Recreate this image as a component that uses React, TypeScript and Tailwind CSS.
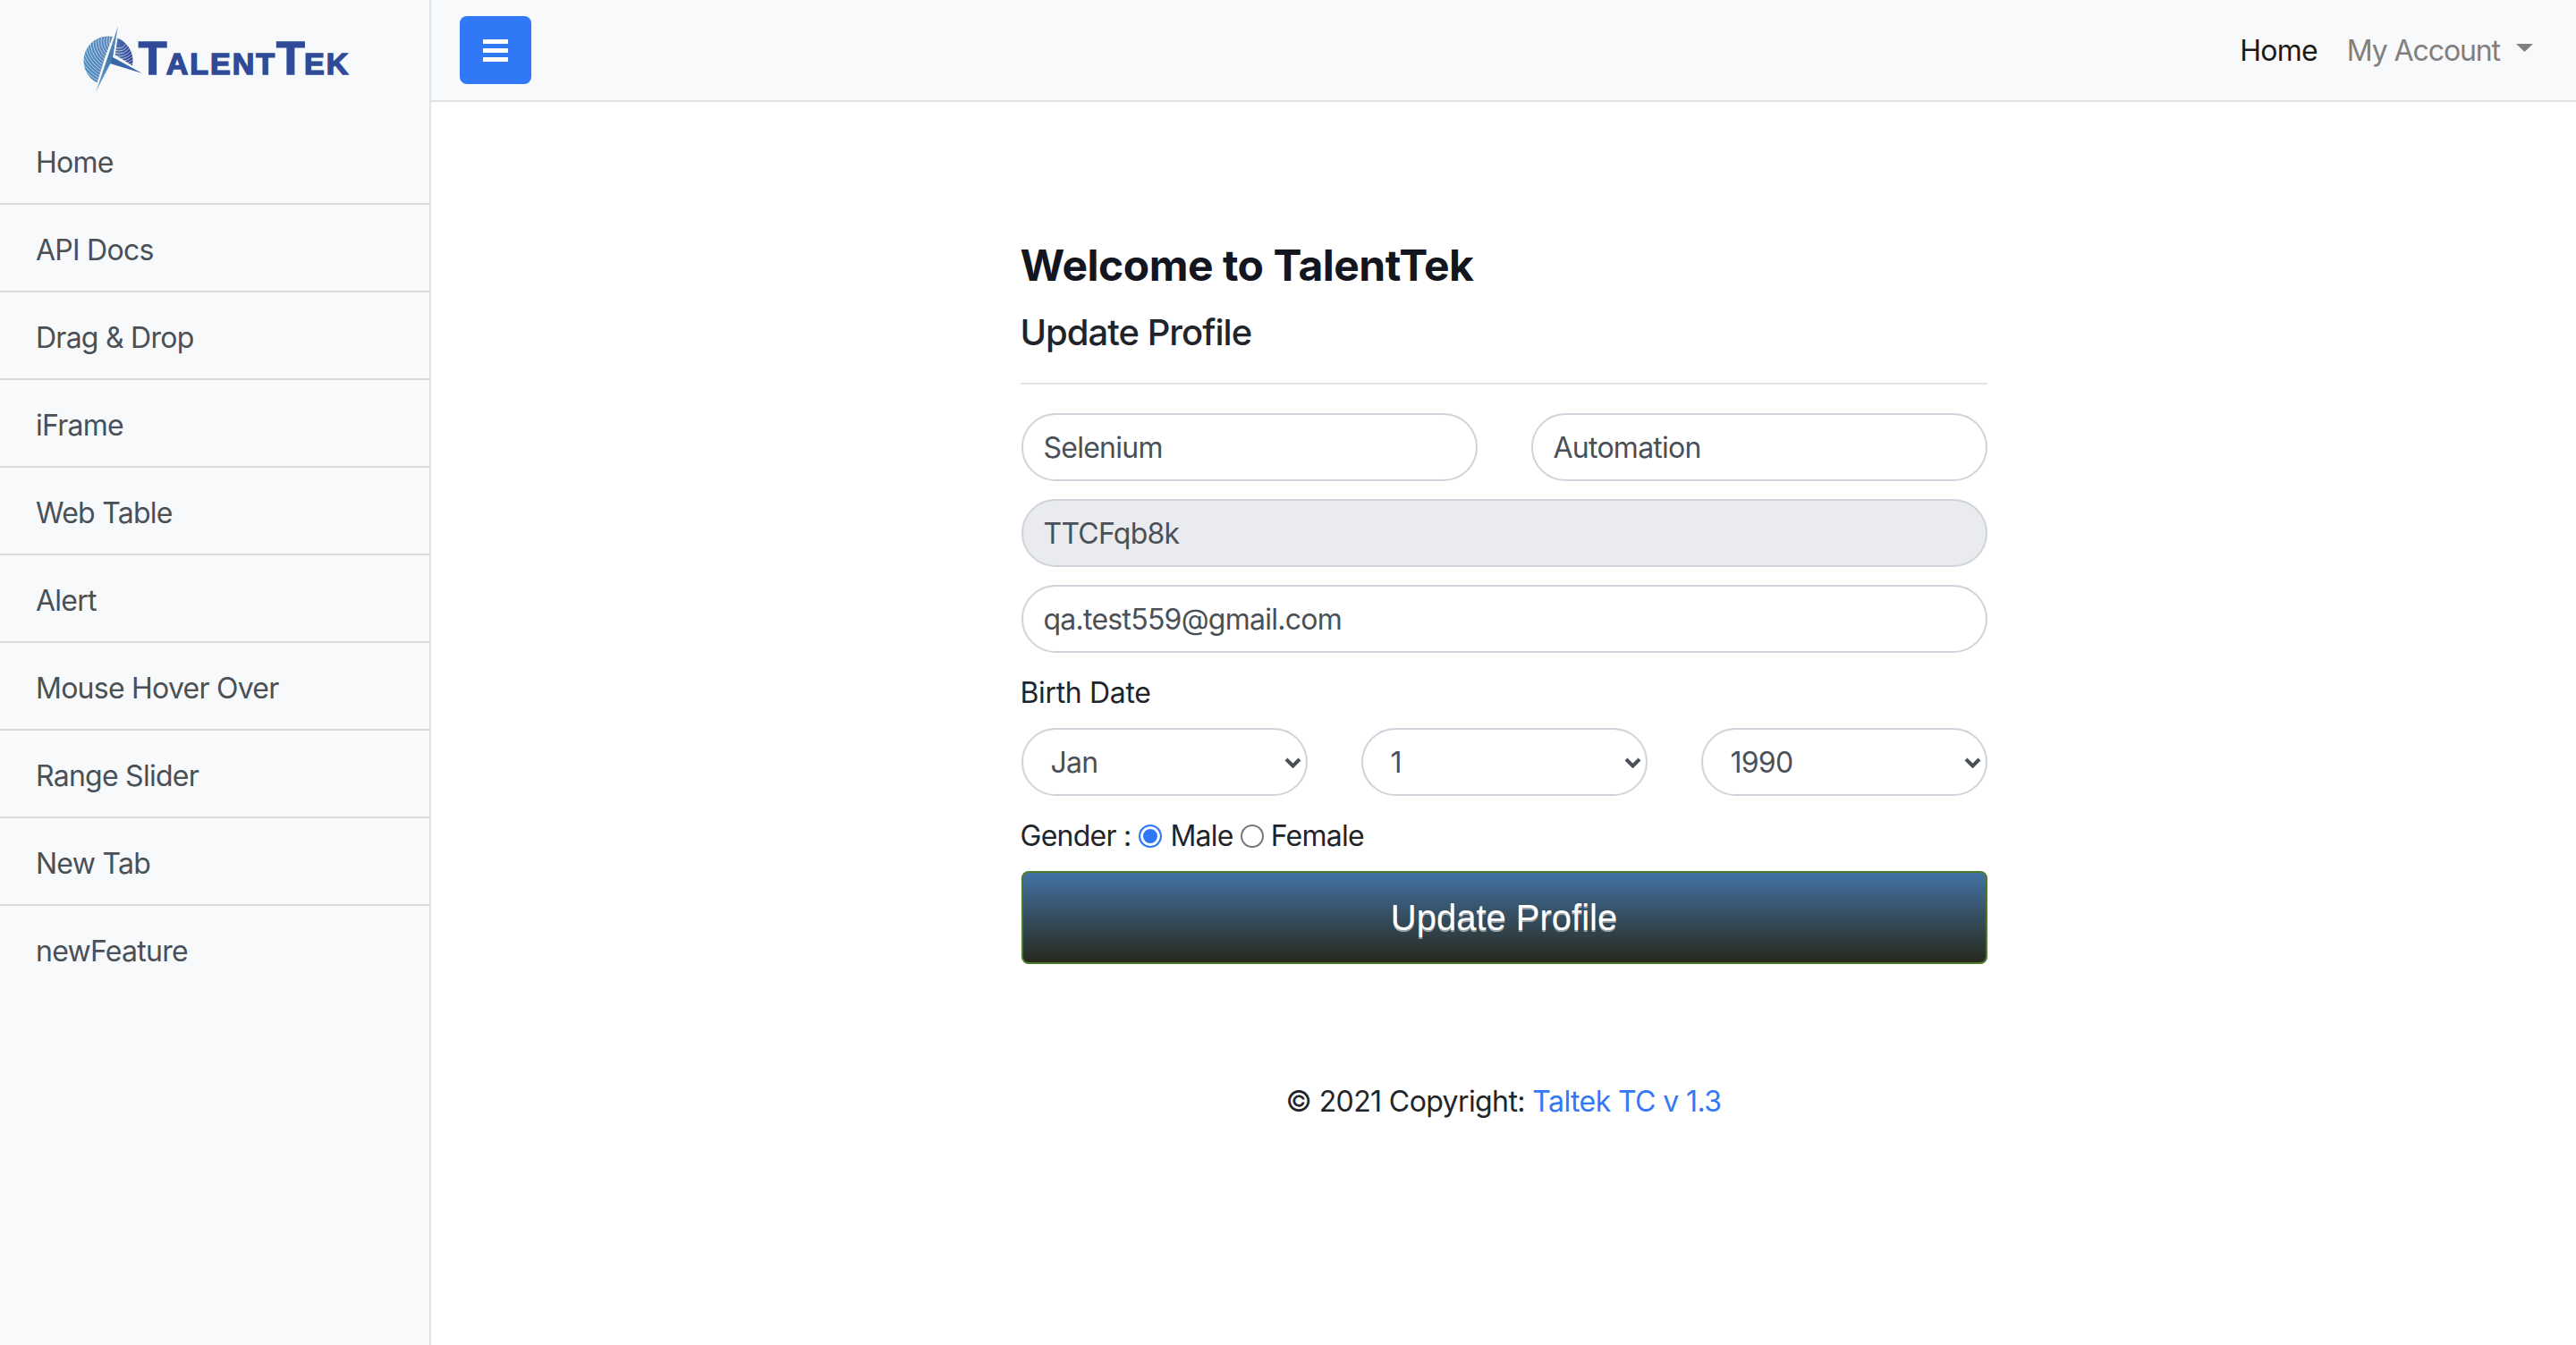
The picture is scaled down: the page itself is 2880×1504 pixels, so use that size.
import React from "react";

const navItems = ["Home", "API Docs", "Drag & Drop", "iFrame", "Web Table", "Alert", "Mouse Hover Over", "Range Slider", "New Tab", "newFeature"];
const rings = [8, 11, 14, 17, 20, 23, 26, 29, 32, 35, 38, 41, 44, 47, 50, 53, 56, 59, 62, 65];

function Logo() {
  return (
    <div className="flex items-center">
      <svg width="68" height="78" viewBox="94 27 68 78" className="block shrink-0 relative z-10">
        <defs>
          <linearGradient id="ball" x1="0" x2="1" y1="0" y2="0">
            <stop offset="0" stopColor="#4a8cbf" />
            <stop offset="0.55" stopColor="#5a86bb" />
            <stop offset="1" stopColor="#2a3c90" />
          </linearGradient>
          <linearGradient id="needle" x1="0" x2="0" y1="0" y2="1">
            <stop offset="0" stopColor="#6d9cc6" />
            <stop offset="0.5" stopColor="#3f78ac" />
            <stop offset="1" stopColor="#7fb0d6" />
          </linearGradient>
          <clipPath id="ballClip"><circle cx="122" cy="68" r="27.5" /></clipPath>
        </defs>
        <circle cx="122" cy="68" r="27.5" fill="url(#ball)" />
        <g clipPath="url(#ballClip)" fill="none" stroke="#f8f9fa" strokeWidth="0.9" opacity="0.7">
          {rings.map((r) => (
            <circle key={r} cx="134" cy="46" r={r} />
          ))}
        </g>
        <path d="M122 68 L165 84 L165 105 L104 105 Z" fill="#f8f9fa" />
        <path d="M133 29 L128 62 L160 82 L124 71 L108 103 L120 64 Z" fill="#f8f9fa" stroke="#f8f9fa" strokeWidth="3" />
        <path d="M133 29 L127 64 L160 82 L124 71 Z" fill="#3a66a8" />
        <path d="M133 29 L121 65 L108 103 L125 70 Z" fill="url(#needle)" />
      </svg>
      <div className="font-['Liberation_Sans',sans-serif] font-bold text-[#2f4b97] leading-none whitespace-nowrap [-webkit-text-stroke:1.5px_#2f4b97] ml-[-6px] mt-[6px] flex items-baseline">
        <span className="text-[52px] leading-[37px]">T</span>
        <span className="text-[34px] leading-[37px] tracking-[2px]">ALENT</span>
        <span className="text-[52px] leading-[37px]">T</span>
        <span className="text-[34px] leading-[37px] tracking-[2px]">EK</span>
      </div>
    </div>
  );
}

function Field({ value, disabled }: { value: string; disabled?: boolean }) {
  return (
    <input
      readOnly
      value={value}
      className={`block w-full h-[76px] rounded-[38px] border-2 border-[#ced4da] px-[23px] text-[32px] tracking-[-0.75px] text-[#495057] outline-none ${disabled ? "bg-[#eaebef]" : "bg-white"}`}
    />
  );
}

function Select({ value }: { value: string }) {
  return (
    <div className="relative">
      <select
        defaultValue={value}
        className="block w-full h-[76px] appearance-none rounded-[38px] border-2 border-[#ced4da] bg-white pt-[2px] pl-[31px] pr-[40px] text-[32px] tracking-[-0.75px] text-[#495057] outline-none"
      >
        <option>{value}</option>
      </select>
      <svg width="19" height="12" viewBox="0 0 19 12" className="absolute right-[7px] top-[33px] pointer-events-none">
        <path d="M2 2 L9.5 9.5 L17 2" fill="none" stroke="#495057" strokeWidth="4" />
      </svg>
    </div>
  );
}

export default function App() {
  return (
    <div className="flex min-h-[1504px] bg-white font-['Inter',sans-serif] text-[32px] tracking-[-0.75px] text-[#212529]">
      <aside className="w-[482px] shrink-0 border-r-2 border-[#dee2e6] bg-[#f8f9fa]">
        <div className="flex h-[131px] items-center justify-center pl-[4px]">
          <Logo />
        </div>
        {navItems.map((item, i) => (
          <div
            key={item}
            className={`h-[98px] pl-[40px] pt-[2px] leading-[98px] text-[#495057] ${i < navItems.length - 1 ? "border-b-2 border-[#d9dadb]" : ""}`}
          >
            {item}
          </div>
        ))}
      </aside>
      <div className="flex min-w-0 flex-1 flex-col">
        <header className="flex h-[114px] items-center justify-between border-b-2 border-[#dee2e6] bg-[#f8f9fa] pl-[32px] pr-[48px]">
          <button className="flex h-[76px] w-[80px] flex-col items-center justify-center gap-[5px] rounded-[8px] bg-[#3178f6]">
            <span className="block h-[5px] w-[28px] bg-white" />
            <span className="block h-[5px] w-[28px] bg-white" />
            <span className="block h-[5px] w-[28px] bg-white" />
          </button>
          <nav className="flex items-center pt-[2px]">
            <span className="text-[#1a1a1a]">Home</span>
            <span className="ml-[33px] tracking-[-1.1px] text-[#7f7f7f]">My Account</span>
            <svg width="19" height="9" viewBox="0 0 19 9" className="ml-[18px] mb-[8px]">
              <path d="M0 0 H19 L9.5 9 Z" fill="#7f7f7f" />
            </svg>
          </nav>
        </header>
        <main className="flex justify-center pt-[154px]">
          <div className="w-[1081px]">
            <h3 className="text-[48px] font-bold leading-[58px] tracking-[-0.5px] text-[#14161f]">Welcome to TalentTek</h3>
            <h5 className="mt-[22px] text-[40px] font-medium leading-[48px] tracking-[-1px] text-[#212529]">Update Profile</h5>
            <hr className="mt-[32px] border-t-2 border-[#e3e4e6]" />
            <div className="mt-[32px] ml-[1px] grid grid-cols-2 gap-[60px]">
              <Field value="Selenium" />
              <Field value="Automation" />
            </div>
            <div className="mt-[20px] ml-[1px]"><Field value="TTCFqb8k" disabled /></div>
            <div className="mt-[20px] ml-[1px]"><Field value="qa.test559@gmail.com" /></div>
            <div className="mt-[21px] leading-[48px] tracking-[-0.35px]">Birth Date</div>
            <div className="mt-[15px] ml-[1px] grid grid-cols-3 gap-[60px]">
              <Select value="Jan" />
              <Select value="1" />
              <Select value="1990" />
            </div>
            <div className="mt-[21px] flex h-[48px] items-center">
              <span>Gender :</span>
              <input type="radio" name="gender" defaultChecked className="ml-[9px] h-[26px] w-[26px] appearance-none rounded-full border-2 border-[#767676] checked:border-[#3178f6] checked:bg-[#3178f6] checked:[box-shadow:inset_0_0_0_3px_white]" />
              <span className="ml-[9px]">Male</span>
              <input type="radio" name="gender" className="ml-[8px] h-[26px] w-[26px] appearance-none rounded-full border-2 border-[#767676] checked:border-[#3178f6] checked:bg-[#3178f6] checked:[box-shadow:inset_0_0_0_3px_white]" />
              <span className="ml-[8px]">Female</span>
            </div>
            <button className="mt-[15px] ml-[1px] block h-[104px] w-[1080px] rounded-[8px] border-2 border-[#4a7a2a] bg-gradient-to-b from-[#4272a4] to-[#262a1f] font-['Liberation_Sans',sans-serif] text-[40px] tracking-normal text-white [text-shadow:0_2px_0_rgba(190,190,190,0.75)]">
              Update Profile
            </button>
            <div className="mt-[130px] text-center leading-[48px] tracking-[-0.6px]">
              © 2021 Copyright: <a className="text-[#3178f6]">Taltek TC v 1.3</a>
            </div>
          </div>
        </main>
      </div>
    </div>
  );
}
